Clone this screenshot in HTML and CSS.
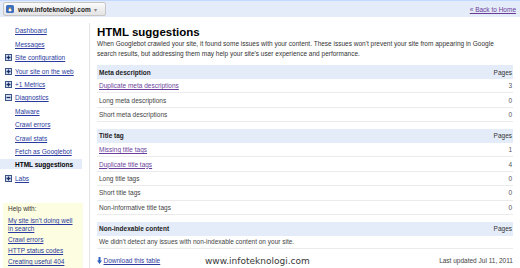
FILE: index.html
```html
<!DOCTYPE html>
<html lang="en">
<head>
    <meta charset="UTF-8">
    <meta name="viewport" content="width=device-width, initial-scale=1.0">
    <title>HTML suggestions</title>
    <link rel="stylesheet" href="styles.css">
</head>
<body>

<div class="topbar">
    <div class="site-select">
        <svg class="favicon" width="8" height="8" viewBox="0 0 8 8"><rect x="0" y="0" width="8" height="8" rx="1.5" fill="#3d6fc0"/><path d="M2 5.5 4 2l2 3.5z" fill="#f3b43c"/><circle cx="4" cy="5.3" r="1.2" fill="#fff"/></svg>
        <span class="site-name">www.infoteknologi.com</span>
        <span class="caret">&#9662;</span>
    </div>
    <a class="back" href="#">&laquo; Back to Home</a>
</div>

<div class="layout">
    <nav class="sidebar">
        <ul class="nav">
            <li><a href="#">Dashboard</a></li>
            <li><a href="#">Messages</a></li>
            <li class="group"><svg class="tgl" width="7" height="7" viewBox="0 0 7 7"><rect x=".5" y=".5" width="6" height="6" fill="#d9e2f2" stroke="#3b5488"/><path d="M1.5 3.5h4M3.5 1.5v4" stroke="#1c2f66" stroke-width="1.3"/></svg><a href="#">Site configuration</a></li>
            <li class="group"><svg class="tgl" width="7" height="7" viewBox="0 0 7 7"><rect x=".5" y=".5" width="6" height="6" fill="#d9e2f2" stroke="#3b5488"/><path d="M1.5 3.5h4M3.5 1.5v4" stroke="#1c2f66" stroke-width="1.3"/></svg><a href="#">Your site on the web</a></li>
            <li class="group"><svg class="tgl" width="7" height="7" viewBox="0 0 7 7"><rect x=".5" y=".5" width="6" height="6" fill="#d9e2f2" stroke="#3b5488"/><path d="M1.5 3.5h4M3.5 1.5v4" stroke="#1c2f66" stroke-width="1.3"/></svg><a href="#">+1 Metrics</a></li>
            <li class="group"><svg class="tgl" width="7" height="7" viewBox="0 0 7 7"><rect x=".5" y=".5" width="6" height="6" fill="#d9e2f2" stroke="#3b5488"/><path d="M1.5 3.5h4" stroke="#1c2f66" stroke-width="1.3"/></svg><a href="#">Diagnostics</a></li>
            <li><a href="#">Malware</a></li>
            <li><a href="#">Crawl errors</a></li>
            <li><a href="#">Crawl stats</a></li>
            <li><a href="#">Fetch as Googlebot</a></li>
            <li class="current">HTML suggestions</li>
            <li class="group"><svg class="tgl" width="7" height="7" viewBox="0 0 7 7"><rect x=".5" y=".5" width="6" height="6" fill="#d9e2f2" stroke="#3b5488"/><path d="M1.5 3.5h4M3.5 1.5v4" stroke="#1c2f66" stroke-width="1.3"/></svg><a href="#">Labs</a></li>
        </ul>

        <div class="help">
            <div class="help-title">Help with:</div>
            <ul>
                <li><a href="#">My site isn't doing well in search</a></li>
                <li><a href="#">Crawl errors</a></li>
                <li><a href="#">HTTP status codes</a></li>
                <li><a href="#">Creating useful 404</a></li>
            </ul>
        </div>
    </nav>

    <main class="content">
        <h1>HTML suggestions</h1>
        <p class="intro">When Googlebot crawled your site, it found some issues with your content. These issues won't prevent your site from appearing in Google search results, but addressing them may help your site's user experience and performance.</p>

        <div class="issues">
            <div class="head"><span class="head-name">Meta description</span><span>Pages</span></div>
            <div class="row"><a href="#">Duplicate meta descriptions</a><span class="num">3</span></div>
            <div class="row"><span>Long meta descriptions</span><span class="num">0</span></div>
            <div class="row"><span>Short meta descriptions</span><span class="num">0</span></div>
        </div>

        <div class="issues">
            <div class="head"><span class="head-name">Title tag</span><span>Pages</span></div>
            <div class="row"><a href="#">Missing title tags</a><span class="num">1</span></div>
            <div class="row"><a href="#">Duplicate title tags</a><span class="num">4</span></div>
            <div class="row"><span>Long title tags</span><span class="num">0</span></div>
            <div class="row"><span>Short title tags</span><span class="num">0</span></div>
            <div class="row"><span>Non-informative title tags</span><span class="num">0</span></div>
        </div>

        <div class="issues">
            <div class="head"><span class="head-name">Non-indexable content</span><span>Pages</span></div>
            <div class="row short"><span>We didn't detect any issues with non-indexable content on your site.</span></div>
        </div>

        <div class="foot">
            <span class="download">
                <svg width="5" height="7" viewBox="0 0 5 7"><path d="M1.5 0h2v3.5H5L2.5 7 0 3.5h1.5z" fill="#2f62c0"/></svg>
                <a href="#">Download this table</a>
            </span>
            <span class="updated">Last updated Jul 11, 2011</span>
        </div>
    </main>
</div>

<div class="watermark">www.infoteknologi.com</div>

</body>
</html>
```

FILE: styles.css
```css
body {
    font-family: 'Liberation Sans', Arial, sans-serif;
    font-size: 6.5px;
    color: #444;
    margin: 0;
    padding: 0;
    height: 268px;
    overflow: hidden;
    position: relative;
    background: #fff;
}
a {
    color: #2b3a9e;
    text-decoration: underline;
}
ul {
    list-style-type: none;
    margin: 0;
    padding: 0;
}

/* top bar */
.topbar {
    height: 16px;
    background: #e5ecf9;
    border-top: 1px solid #c3d9ff;
    display: flex;
    align-items: flex-start;
    padding: 1px 4px 0 3px;
    box-sizing: content-box;
    height: 15px;
}
.site-select {
    height: 12px;
    width: 99px;
    border: 1px solid #c6c6c6;
    border-radius: 2px;
    background: linear-gradient(#fbfbfb, #e3e3e3);
    display: flex;
    align-items: center;
    padding: 0 0 0 2px;
}
.favicon {
    margin-right: 4px;
}
.site-name {
    font-weight: bold;
    color: #222;
}
.caret {
    color: #888;
    font-size: 6px;
    margin-left: 3px;
}
.back {
    margin-left: auto;
    line-height: 16px;
    color: #6a3d9a;
}

/* layout */
.layout {
    display: flex;
}
.sidebar {
    width: 89px;
    margin-top: 6px;
    padding-top: 1.3px;
    border-right: 1px solid #e3e3e3;
    height: 245px;
}
.nav {
    margin-right: 7px;
}
.nav li {
    height: 13.4px;
    display: flex;
    align-items: center;
    padding-left: 15px;
}
.nav li.group {
    padding-left: 5px;
}
.tgl {
    margin-right: 3px;
}
.nav li.current {
    font-weight: bold;
    color: #000;
    background: linear-gradient(transparent 0.7px, #e5ecf9 0.7px, #e5ecf9 10.7px, transparent 10.7px);
}

.help {
    margin: 18px 6px 0 3px;
    background: #fdfde2;
    padding: 2px 5px 6px 5px;
    line-height: 8px;
    color: #333;
}
.help-title {
    margin-bottom: 4px;
}
.help li + li {
    margin-top: 3px;
}

/* main content */
.content {
    flex: 1;
    padding: 7.5px 7px 0 7px;
}
h1 {
    font-size: 11.5px;
    line-height: 14px;
    color: #000;
    margin: 0;
}
.intro {
    margin: 0 0 6.5px;
    line-height: 10px;
    color: #333;
}
.issues {
    margin-bottom: 6.8px;
}
.head {
    height: 14px;
    background: #e5ecf9;
    display: flex;
    justify-content: space-between;
    align-items: center;
    padding: 0 1px 0 2px;
    color: #333;
}
.head-name {
    font-weight: bold;
    color: #222;
}
.row {
    height: 13.4px;
    border-bottom: 1px solid #ebebeb;
    display: flex;
    justify-content: space-between;
    align-items: center;
    padding: 0 1px 0 2px;
}
.row a {
    color: #6c3f9c;
}
.row.short {
    height: 12px;
}
.num {
    color: #555;
}
.foot {
    display: flex;
    justify-content: space-between;
    line-height: 10px;
    margin-top: 7px;
    color: #444;
}
.download {
    display: flex;
    align-items: center;
    gap: 1.5px;
}

.watermark {
    position: absolute;
    left: 205px;
    top: 255.5px;
    font-family: 'DejaVu Sans', Verdana, sans-serif;
    font-size: 9px;
    line-height: 11px;
    color: #383838;
    text-shadow: 0 0 2px #fff, 0 0 1px #fff;
}
```
